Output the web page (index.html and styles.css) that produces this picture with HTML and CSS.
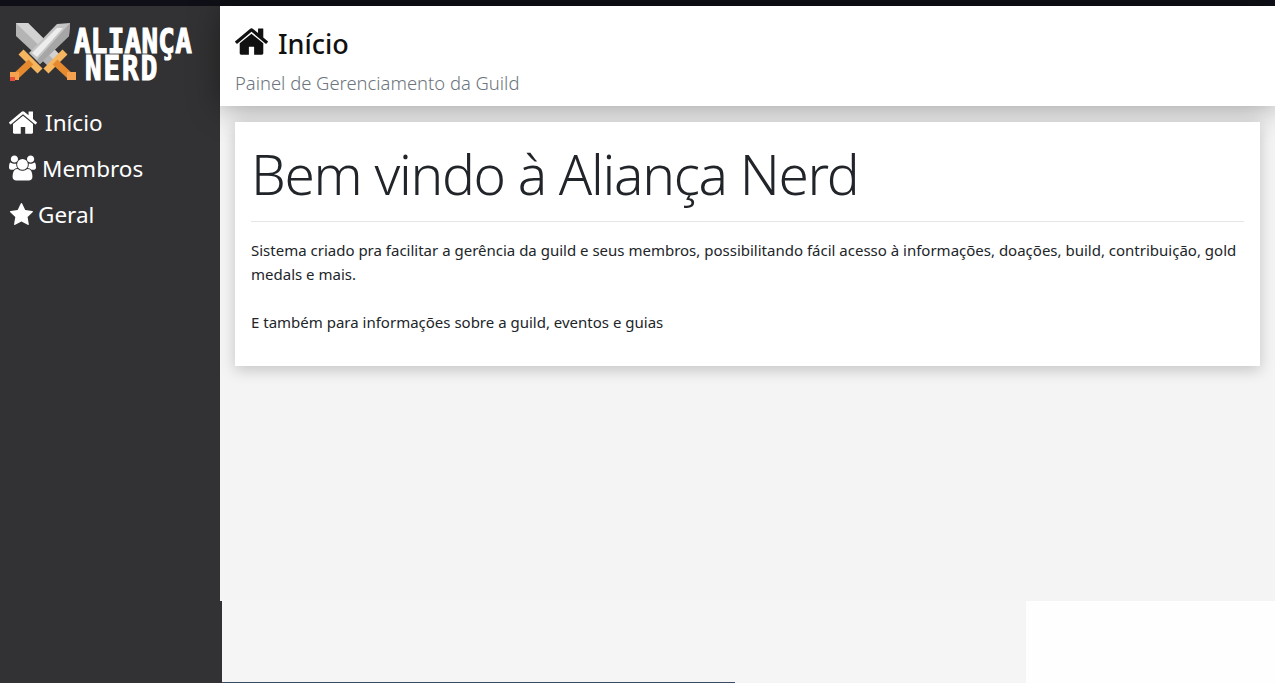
FILE: index.html
```html
<!DOCTYPE html>
<html lang="pt-BR">
<head>
    <meta charset="UTF-8">
    <meta name="viewport" content="width=device-width, initial-scale=1.0">
    <title>Aliança Nerd</title>
    <link rel="stylesheet" href="styles.css">
</head>
<body>
    <div class="topbar"></div>

    <div class="app">
        <aside class="sidebar">
            <div class="logo">
                <svg class="logo-swords" viewBox="8 20 70 64" width="70" height="64">
                    <!-- back sword -->
                    <polygon points="16,23 28,23 60,55 48,66 16,36" fill="#b4b4b4"/>
                    <polygon points="16,23 28,23 60,55 54,60 21,28" fill="#d2d2d2"/>
                    <line x1="46" y1="71" x2="65" y2="52" stroke="#f6b65f" stroke-width="7"/>
                    <line x1="55" y1="62" x2="70" y2="76" stroke="#e58a2e" stroke-width="7"/>
                    <rect x="67" y="72" width="9" height="8" fill="#f4a24f"/>
                    <!-- front sword -->
                    <polygon points="70,23 57,24 29,53 40,64 69,36" fill="#c4c4c4"/>
                    <polygon points="63,28 57,28 32,53 37,57" fill="#ededed"/>
                    <polygon points="70,23 69,36 40,64 37,60" fill="#a6a6a6"/>
                    <line x1="21" y1="52" x2="40" y2="71" stroke="#f6b65f" stroke-width="7"/>
                    <line x1="31" y1="62" x2="16" y2="76" stroke="#e58a2e" stroke-width="7"/>
                    <rect x="10" y="72" width="9" height="8" fill="#f4a24f"/>
                    <rect x="10" y="77" width="5" height="4" fill="#e8503a"/>
                </svg>
                <div class="logo-text">
                    <span class="logo-line">ALIANÇA</span>
                    <span class="logo-line logo-line-small">NERD</span>
                </div>
            </div>

            <nav class="menu">
                <a class="menu-item" href="#">
                    <svg class="icon-home" viewBox="90 253 1612 1283"><use href="#home"/></svg>
                    <span class="menu-home">Início</span>
                </a>
                <a class="menu-item" href="#">
                    <svg class="icon-users" viewBox="0 0 1920 1792"><path d="M593 896q-162 5-265 128h-134q-82 0-138-40.500t-56-118.500q0-353 124-353 6 0 43.500 21t97.500 42.500 119 21.500q67 0 133-23-5 37-5 66 0 139 81 256zm1071 637q0 120-73 189.500t-194 69.500h-874q-121 0-194-69.500t-73-189.500q0-53 3.500-103.500t14-109 26.500-108.500 43-97.500 62-81 85.500-53.500 111.500-20q10 0 43 21.500t73 48 107 48 135 21.500 135-21.500 107-48 73-48 43-21.500q61 0 111.500 20t85.500 53.500 62 81 43 97.500 26.500 108.500 14 109 3.500 103.500zm-1024-1277q0 106-75 181t-181 75-181-75-75-181 75-181 181-75 181 75 75 181zm704 384q0 159-112.500 271.500t-271.500 112.500-271.500-112.500-112.500-271.500 112.500-271.500 271.500-112.500 271.500 112.500 112.500 271.500zm576 225q0 78-56 118.500t-138 40.500h-134q-103-123-265-128 81-117 81-256 0-29-5-66 66 23 133 23 59 0 119-21.500t97.500-42.500 43.500-21q124 0 124 353zm-128-609q0 106-75 181t-181 75-181-75-75-181 75-181 181-75 181 75 75 181z"/></svg>
                    <span>Membros</span>
                </a>
                <a class="menu-item" href="#">
                    <svg class="icon-star" viewBox="0 32 1728 1587"><path d="M1728 647q0 22-26 48l-363 354 86 500q1 7 1 20 0 21-10.500 35.500t-30.500 14.500q-19 0-40-12l-449-236-449 236q-22 12-40 12-21 0-31.500-14.500t-10.500-35.500q0-6 2-20l86-500-364-354q-25-27-25-48 0-37 56-46l502-73 225-455q19-41 49-41t49 41l225 455 502 73q56 9 56 46z"/></svg>
                    <span>Geral</span>
                </a>
            </nav>
        </aside>

        <main class="main">
            <header class="page-header">
                <h2 class="page-title">
                    <svg class="icon-title" viewBox="90 253 1612 1283"><path id="home" d="M1472 992v480q0 26-19 45t-45 19h-384v-384h-256v384h-384q-26 0-45-19t-19-45v-480q0-1 .5-3t.5-3l575-474 575 474q1 2 1 6zm223-69l-62 74q-8 9-21 11h-3q-13 0-21-7l-692-577-692 577q-12 8-24 7-13-2-21-11l-62-74q-8-10-7-23.500t11-21.500l719-599q32-26 76-26t76 26l244 204v-195q0-14 9-23t23-9h192q14 0 23 9t9 23v408l219 182q10 8 11 21.500t-7 23.500z"/></svg>
                    <span>Início</span>
                </h2>
                <p class="page-subtitle">Painel de Gerenciamento da Guild</p>
            </header>

            <section class="content">
                <div class="card">
                    <h1 class="card-title">Bem vindo à Aliança Nerd</h1>
                    <hr class="card-rule">
                    <p class="card-text">Sistema criado pra facilitar a gerência da guild e seus membros, possibilitando fácil acesso à informações, doações, build, contribuição, gold medals e mais.<br><br>E também para informações sobre a guild, eventos e guias</p>
                </div>
            </section>
        </main>
    </div>

    <div class="bottom">
        <div class="bottom-side"></div>
        <div class="bottom-middle"><div class="bottom-line"></div></div>
        <div class="bottom-blank"></div>
    </div>
</body>
</html>
```

FILE: styles.css
```css
* {
    box-sizing: border-box;
}

body {
    margin: 0;
    height: 683px;
    overflow: hidden;
    background-color: #f4f4f4;
    font-family: 'Noto Sans', 'Open Sans', sans-serif;
    color: #212529;
}

.topbar {
    height: 6px;
    background-color: #0f0f17;
}

.app {
    display: flex;
    height: 595px;
}

.sidebar {
    width: 220px;
    flex-shrink: 0;
    background-color: #323234;
}

.logo {
    display: flex;
    padding: 14px 0 0 8px;
    height: 93px;
}

.logo-swords {
    flex-shrink: 0;
}

.logo-text {
    display: flex;
    flex-direction: column;
    align-items: flex-start;
    gap: 5px;
    margin-left: -4px;
    padding-top: 10px;
}

.logo-line {
    font-family: 'DejaVu Sans Mono', monospace;
    font-weight: 700;
    font-size: 27.5px;
    line-height: 22px;
    letter-spacing: 0.3px;
    color: #fff;
    -webkit-text-stroke: 1px #fff;
    transform: scaleY(1.2);
}

.logo-line-small {
    margin-left: 11px;
    letter-spacing: 2px;
}

.menu {
    display: flex;
    flex-direction: column;
    padding-left: 9px;
}

.menu-item {
    display: flex;
    align-items: center;
    height: 46px;
    color: #fff;
    text-decoration: none;
    font-size: 22.5px;
    fill: #fff;
}

.icon-home {
    width: 28px;
    height: 23px;
    margin-right: 8px;
}

.icon-users {
    width: 27px;
    height: 26px;
    margin-right: 6px;
}

.icon-star {
    width: 24px;
    height: 22px;
    margin-right: 5px;
}

.main {
    flex: 1;
    min-width: 0;
}

.page-header {
    position: relative;
    height: 100px;
    padding: 21px 15px 0;
    background-color: #fff;
    box-shadow: 0 2px 30px rgba(0, 0, 0, 0.38);
}

.page-title {
    display: flex;
    align-items: center;
    margin: 0;
    font-size: 27px;
    font-weight: 500;
    line-height: 34px;
    color: #111;
    fill: #111;
}

.icon-title {
    width: 33px;
    height: 27px;
    margin: -5px 10px 0 0;
}

.page-subtitle {
    margin: 9px 0 0;
    padding-top: 1px;
    font-size: 18.4px;
    font-weight: 300;
    line-height: 24px;
    color: #6c757d;
}

.content {
    padding: 16px 15px;
}

.card {
    position: relative;
    padding: 16px;
    background-color: #fff;
    box-shadow: 0 4px 14px rgba(0, 0, 0, 0.2);
}

.card-title {
    height: 67px;
    margin: 0;
    padding-top: 3px;
    font-size: 55px;
    font-weight: 300;
    line-height: 1.2;
    letter-spacing: -1.3px;
}

.card-rule {
    margin: 16px 0;
    border: 0;
    border-top: 1px solid rgba(0, 0, 0, 0.1);
}

.card-text {
    margin: 0 0 16px;
    font-size: 15px;
    line-height: 24px;
}

.bottom {
    display: flex;
    height: 82px;
}

.bottom-side {
    width: 222px;
    background-color: #323234;
}

.bottom-middle {
    display: flex;
    align-items: flex-end;
    width: 804px;
    background-color: #f5f5f5;
}

.bottom-line {
    width: 513px;
    height: 1px;
    background-color: #3b4a63;
}

.bottom-blank {
    flex: 1;
    background-color: #fefefe;
}
```
